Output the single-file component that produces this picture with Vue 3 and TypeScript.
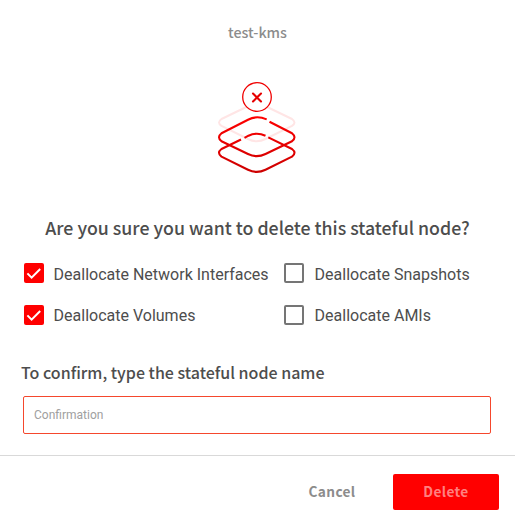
<script setup lang="ts">
import { ref } from 'vue'

interface Option {
  label: string
  checked: boolean
}

const nodeName = 'test-kms'
const confirmation = ref('')
const options = ref<Option[]>([
  { label: 'Deallocate Network Interfaces', checked: true },
  { label: 'Deallocate Snapshots', checked: false },
  { label: 'Deallocate Volumes', checked: true },
  { label: 'Deallocate AMIs', checked: false },
])
</script>

<template>
  <div class="dialog">
    <header class="node-name">{{ nodeName }}</header>

    <svg class="layers" viewBox="215 80 84 96" fill="none" stroke-linecap="butt" stroke-linejoin="round">
      <defs>
        <linearGradient id="layerRed" x1="0" y1="116" x2="0" y2="173" gradientUnits="userSpaceOnUse">
          <stop offset="0" stop-color="#ff0000" />
          <stop offset="1" stop-color="#cc0000" />
        </linearGradient>
      </defs>
      <path class="ghost" d="M251.500 104.500L221.500 119Q216.500 122.500 221.500 125.800L248 139Q256.700 143.400 265.500 139L292 125.800Q297 122.500 292 119L262 104.500Q256.700 102 251.500 104.500" />
      <path class="layer" d="M269.500 121.700L292 133.300Q297 137.300 292 141.300L265.500 154Q256.700 158.300 248 154L221.500 141.300Q216.500 137.300 221.500 133.300L248 119.700Q256.700 115 266.700 119.400" />
      <path class="layer" d="M268.300 137.400L292 149Q297 152.800 292 156.600L265.500 169.700Q256.700 174 248 169.700L221.500 156.600Q216.500 152.800 221.500 149L241 139.500" />
      <path class="layer" d="M244.500 137.900L248.500 135.700Q256.700 131.700 265.500 135.700" />
      <circle class="badge" cx="257" cy="97" r="14.3" />
      <path class="cross" d="M253 93.500L261 101.500M261 93.500L253 101.500" />
    </svg>

    <h1 class="question">Are you sure you want to delete this stateful node?</h1>

    <div class="options">
      <label v-for="option in options" :key="option.label" class="option">
        <input v-model="option.checked" class="native" type="checkbox" />
        <span class="box" :class="{ checked: option.checked }">
          <svg v-if="option.checked" class="tick" viewBox="0 0 20 20">
            <path d="M3.400 10.400L7.600 14.600L16.200 6" />
          </svg>
        </span>
        <span class="label">{{ option.label }}</span>
      </label>
    </div>

    <h2 class="prompt">To confirm, type the stateful node name</h2>
    <input v-model="confirmation" class="confirm" type="text" placeholder="Confirmation" />

    <footer class="actions">
      <button class="button cancel" type="button">Cancel</button>
      <button class="button delete" type="button">Delete</button>
    </footer>
  </div>
</template>

<style>
body {
  background: #fff;
}
</style>

<style scoped>
.dialog {
  box-sizing: border-box;
  width: 515px;
  height: 527px;
  display: flex;
  flex-direction: column;
  overflow: hidden;
  background: #fff;
  color: #4d4d4d;
  font-family: "Noto Sans CJK SC", "Open Sans", sans-serif;
}
.dialog > * {
  flex-shrink: 0;
}
.node-name {
  padding-top: 20px;
  height: 24px;
  line-height: 24px;
  text-align: center;
  font-size: 14.3px;
  font-weight: 500;
  color: #8c8c8c;
}
.layers {
  width: 84px;
  height: 96px;
  margin: 36px 0 0 215px;
}
.layer {
  stroke: url(#layerRed);
  stroke-width: 2.1;
}
.ghost {
  stroke: #ffe5e5;
  stroke-width: 2;
}
.badge {
  fill: #fff;
  stroke: #f00000;
  stroke-width: 1.3;
}
.cross {
  stroke: #e60000;
  stroke-width: 2.1;
  stroke-linecap: round;
}
.question {
  margin: 36px 0 0;
  height: 30px;
  line-height: 30px;
  text-align: center;
  white-space: nowrap;
  font-size: 17.75px;
  font-weight: 500;
}
.options {
  display: grid;
  grid-template-columns: 260px 1fr;
  row-gap: 18px;
  padding: 19px 0 0 24px;
}
.option {
  display: flex;
  align-items: center;
  height: 24px;
  font-family: Roboto, sans-serif;
  font-size: 16px;
  white-space: nowrap;
}
.native {
  display: none;
}
.box {
  box-sizing: border-box;
  width: 20px;
  height: 20px;
  border: 2px solid #757575;
  border-radius: 2px;
}
.box.checked {
  border: 0;
  background: #f00;
}
.tick {
  display: block;
  width: 20px;
  height: 20px;
  fill: none;
  stroke: #fff;
  stroke-width: 2;
}
.label {
  margin-left: 9.6px;
  padding-top: 2px;
  line-height: 24px;
}
.option:nth-child(even) .label {
  margin-left: 10.6px;
}
.option:nth-child(-n + 2) .label {
  padding-top: 4px;
}
.prompt {
  margin: 32px 0 0 21px;
  height: 26px;
  line-height: 26px;
  white-space: nowrap;
  font-size: 16px;
  font-weight: 500;
}
.confirm {
  box-sizing: border-box;
  width: 468px;
  height: 38px;
  margin: 11px 0 0 23px;
  padding: 0 10px;
  border: 1px solid #f5472d;
  border-radius: 2px;
  outline: none;
  background: #fff;
  font-family: Roboto, sans-serif;
  font-size: 12px;
}
.confirm::placeholder {
  color: #a0a0a0;
}
.actions {
  box-sizing: border-box;
  display: flex;
  justify-content: flex-end;
  height: 72px;
  margin-top: 21px;
  padding: 18px 16px 0 0;
  border-top: 1px solid #d9d9d9;
}
.button {
  height: 36px;
  padding: 0 0 3px;
  border: 0;
  border-radius: 2px;
  background: none;
  font-family: inherit;
  font-size: 13.7px;
  font-weight: 700;
  letter-spacing: 0.35px;
}
.cancel {
  width: 106px;
  margin-right: 8px;
  color: #8c8c8c;
}
.delete {
  width: 106px;
  background: #f00;
  color: #ff8080;
}
</style>
